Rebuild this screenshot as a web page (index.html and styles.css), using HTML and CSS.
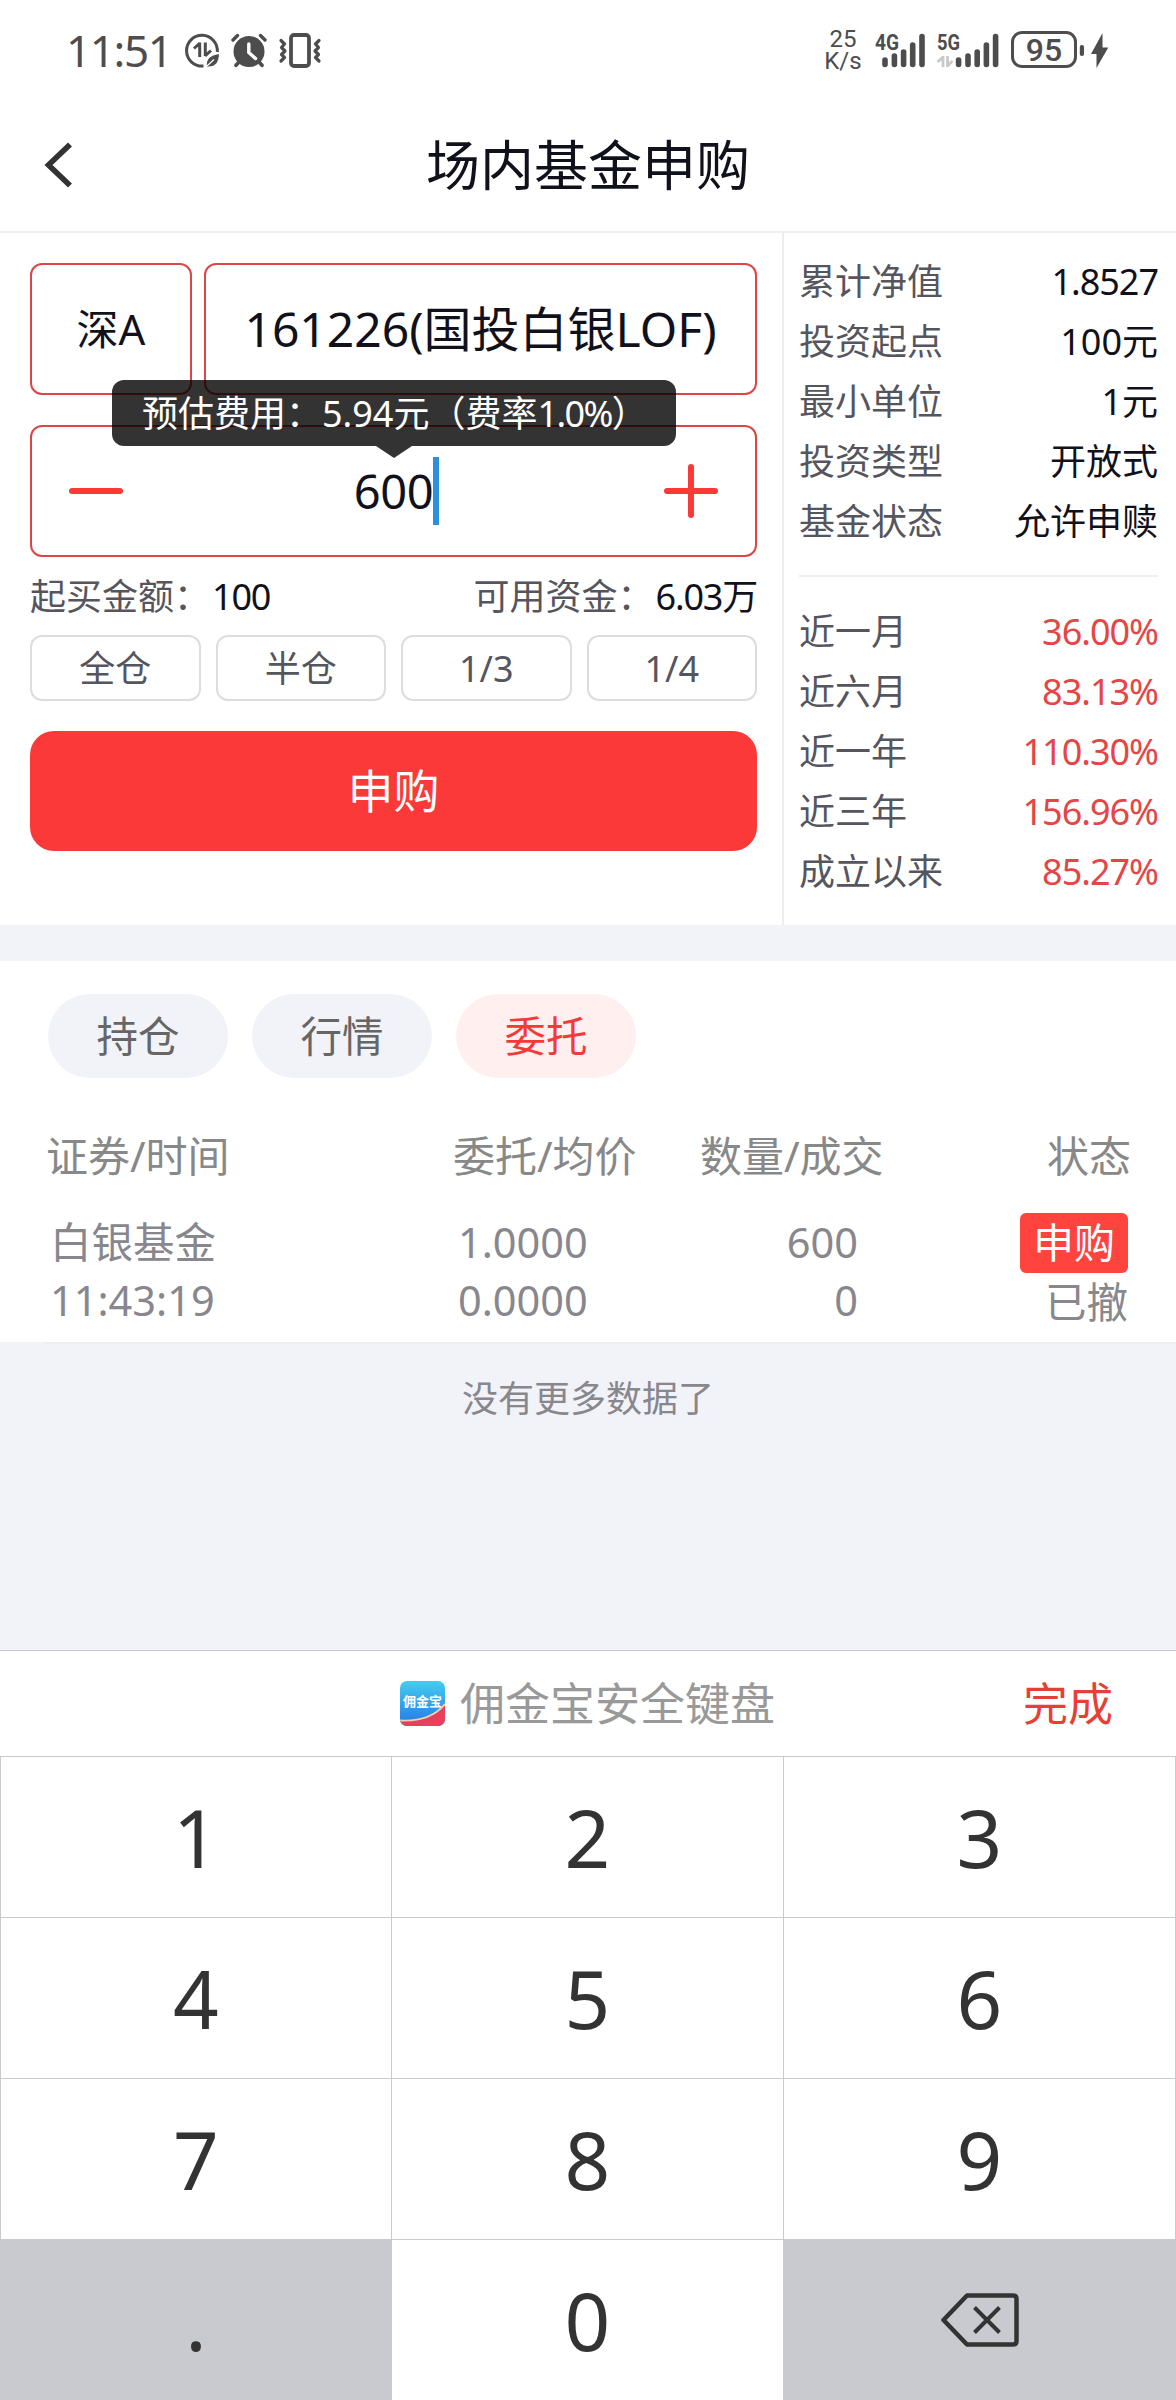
FILE: index.html
```html
<!DOCTYPE html>
<html lang="zh-CN">
<head>
<meta charset="utf-8">
<title>场内基金申购</title>
<link rel="stylesheet" href="styles.css">
</head>
<body>
<header class="statusbar">
  <span class="clock">11:51</span>
  <svg class="ic-data" width="36" height="36" viewBox="184 31 36 36" fill="none" stroke="#4d4d4d">
    <path d="M203.500 65A15.400 15.400 0 1 1 217.300 51" stroke-width="3"/>
    <path d="M199.700 41.500V56M194 47.500L200 42" stroke-width="3"/>
    <path d="M205.300 41.500V55M205 55L211 49.500" stroke-width="3"/>
    <path d="M219 53C218.500 61 216 66 207 65.500C206 58 210 54.500 219 53Z" fill="#4d4d4d" stroke="none"/>
    <path d="M207 65L214 58.500" stroke="#fff" stroke-width="1.200"/>
  </svg>
  <svg class="ic-alarm" width="38" height="36" viewBox="230 31 38 36" fill="none" stroke="#4d4d4d" stroke-linecap="round">
    <circle cx="249" cy="50.500" r="15.500" fill="#4d4d4d" stroke="none"/>
    <path d="M233 39L237.500 34.500M260.500 34.500L265 39" stroke-width="3.400"/>
    <path d="M239 61L236 64.300M259 61L262 64.300" stroke-width="3.600"/>
    <path d="M248.800 43V51.500L255.500 57.500" stroke="#fff" stroke-width="3.400"/>
  </svg>
  <svg class="ic-vib" width="44" height="36" viewBox="278 31 44 36" fill="none" stroke="#4d4d4d" stroke-width="3.200" stroke-linecap="round" stroke-linejoin="round">
    <rect x="291" y="34" width="18" height="31" rx="3" stroke-width="3.800"/>
    <path d="M281 39.500L284.500 43L281.500 46.500L285 50L281.500 53.500L284.500 56.500L281 60"/>
    <path d="M319 39.500L315.500 43L318.500 46.500L315 50L318.500 53.500L315.500 56.500L319 60"/>
  </svg>
  <div class="netspeed"><span>25</span><span>K/s</span></div>
  <svg class="ic-sig" width="52" height="36" viewBox="874 31 52 36">
    <text class="gen" x="875" y="49" textLength="24" lengthAdjust="spacingAndGlyphs">4G</text>
    <g stroke="#4d4d4d" stroke-width="5.600" stroke-linecap="round"><path d="M885 59V63.500M894.400 55V63.500M903.600 51V63.500M912.700 44V63.500M922 35.500V63.500"/></g>
  </svg>
  <svg class="ic-sig5" width="64" height="36" viewBox="936 31 64 36">
    <text class="gen" x="937" y="49" textLength="23" lengthAdjust="spacingAndGlyphs">5G</text>
    <path d="M943 55V66M937.500 61L943 56M947.500 55V66M947.500 65L952.500 60" fill="none" stroke="#c9c9c9" stroke-width="2.800"/>
    <g stroke="#4d4d4d" stroke-width="5.600" stroke-linecap="round"><path d="M958.600 59V63.500M968 55V63.500M977.200 51V63.500M986.400 44V63.500M995.600 35.500V63.500"/></g>
  </svg>
  <div class="battery">95</div>
  <svg class="ic-bolt" width="30" height="38" viewBox="1079 30 30 38" fill="#4d4d4d">
    <rect x="1079.800" y="44" width="4.200" height="11" rx="2"/>
    <path d="M1102.500 32L1091 53H1096.500V67L1108.300 46.500H1102.500Z"/>
  </svg>
</header>

<nav class="navbar">
  <svg class="back" width="28" height="48" viewBox="44 141 28 48" fill="none" stroke="#333" stroke-width="5.600"><path d="M70 144.500L48.500 165L70 185.500"/></svg>
  <h1 class="title">场内基金申购</h1>
</nav>

<main>
  <section class="trade">
    <div class="order">
      <div class="codes">
        <div class="field market">深A</div>
        <div class="field code">161226(国投白银LOF)</div>
      </div>
      <div class="field amount">
        <svg width="54" height="54" viewBox="0 0 54 54" stroke="#fa3938" stroke-width="6" stroke-linecap="round"><path d="M3 27H51"/></svg>
        <div class="amount-value">600<i class="caret"></i></div>
        <svg width="54" height="54" viewBox="0 0 54 54" stroke="#fa3938" stroke-width="6" stroke-linecap="round"><path d="M3 27H51M27 3V51"/></svg>
        <div class="tip">预估费用：5.94元（费率<span class="rate">1.0%</span>）</div>
      </div>
      <div class="limits">
        <span>起买金额：<b>100</b></span>
        <span>可用资金：<b>6.03万</b></span>
      </div>
      <div class="ratios">
        <span>全仓</span><span>半仓</span><span>1/3</span><span>1/4</span>
      </div>
      <div class="submit">申购</div>
    </div>
    <aside class="info">
      <dl class="facts">
        <div><dt>累计净值</dt><dd class="num">1.8527</dd></div>
        <div><dt>投资起点</dt><dd>100元</dd></div>
        <div><dt>最小单位</dt><dd>1元</dd></div>
        <div><dt>投资类型</dt><dd>开放式</dd></div>
        <div><dt>基金状态</dt><dd>允许申赎</dd></div>
      </dl>
      <dl class="facts returns">
        <div><dt>近一月</dt><dd class="num">36.00%</dd></div>
        <div><dt>近六月</dt><dd class="num">83.13%</dd></div>
        <div><dt>近一年</dt><dd class="num">110.30%</dd></div>
        <div><dt>近三年</dt><dd class="num">156.96%</dd></div>
        <div><dt>成立以来</dt><dd class="num">85.27%</dd></div>
      </dl>
    </aside>
  </section>

  <section class="records">
    <div class="tabs"><span>持仓</span><span>行情</span><span class="active">委托</span></div>
    <div class="grid head"><span>证券/时间</span><span>委托/均价</span><span>数量/成交</span><span class="end">状态</span></div>
    <div class="grid row">
      <div><p>白银基金</p><p>11:43:19</p></div>
      <div class="price"><p>1.0000</p><p>0.0000</p></div>
      <div class="qty"><p>600</p><p>0</p></div>
      <div class="state"><p class="badge">申购</p><p>已撤</p></div>
    </div>
  </section>
  <p class="nomore">没有更多数据了</p>
</main>

<footer class="keyboard">
  <div class="kb-bar">
    <div class="kb-brand">
      <svg width="45" height="45" viewBox="0 0 45 45">
        <defs>
          <linearGradient id="sky" x1="0" y1="0" x2="0" y2="1"><stop offset="0" stop-color="#45cdf0"/><stop offset="1" stop-color="#2577e6"/></linearGradient>
          <clipPath id="tile"><rect width="45" height="45" rx="7"/></clipPath>
        </defs>
        <g clip-path="url(#tile)">
          <rect width="45" height="45" fill="url(#sky)"/>
          <path d="M0 40Q30 42 45 24V45H0Z" fill="#e8405c"/>
          <path d="M0 39.500Q30 41 45 23" fill="none" stroke="#f6cfa5" stroke-width="1.800"/>
        </g>
        <text class="logo-text" x="3" y="24.500">佣金宝</text>
      </svg>
      <span>佣金宝安全键盘</span>
    </div>
    <span class="done">完成</span>
  </div>
  <div class="keys">
    <span>1</span><span>2</span><span>3</span>
    <span>4</span><span>5</span><span>6</span>
    <span>7</span><span>8</span><span>9</span>
    <span class="fn">.</span><span>0</span>
    <span class="fn"><svg width="80" height="56" viewBox="0 0 80 56" fill="none" stroke="#333" stroke-width="4.500" stroke-linejoin="round"><path d="M27 3.500H73Q76.500 3.500 76.500 7V49Q76.500 52.500 73 52.500H27L3.500 28Z"/><path d="M34.500 15.500L59.500 40.500M59.500 15.500L34.500 40.500" stroke-width="4"/></svg></span>
  </div>
</footer>
</body>
</html>
```

FILE: styles.css
```css
* { box-sizing: border-box; margin: 0; padding: 0; }

body {
  width: 1176px;
  height: 2400px;
  display: flex;
  flex-direction: column;
  overflow: hidden;
  background: #f2f3f8;
  color: #11111c;
  font-family: "Noto Sans", "Noto Sans CJK SC", sans-serif;
  font-size: 36px;
  line-height: 60px;
  white-space: nowrap;
}

svg { display: block; flex: none; overflow: visible; }

/* status bar */
.statusbar {
  display: flex;
  align-items: center;
  height: 99px;
  padding-left: 66px;
  background: #fff;
  color: #4d4d4d;
}
.clock { width: 118px; font-size: 44px; letter-spacing: -1.4px; }
.ic-alarm { margin-left: 10px; }
.ic-vib { margin-left: 10px; }
.netspeed {
  display: flex;
  flex-direction: column;
  align-items: center;
  width: 40px;
  margin-left: 501px;
  font: 24px/22px Roboto, sans-serif;
}
.ic-sig { margin-left: 11px; }
.ic-sig5 { margin-left: 10px; }
.gen { font: bold 22px Roboto, sans-serif; fill: #4d4d4d; }
.battery {
  width: 66px;
  height: 37px;
  margin-left: 11px;
  border: 3px solid #4d4d4d;
  border-radius: 11px;
  font: 500 32px/32px Roboto, sans-serif;
  text-align: center;
}
.ic-bolt { margin-left: 2px; }

/* title bar */
.navbar {
  display: grid;
  grid-template-columns: 72px 1fr 72px;
  align-items: center;
  height: 134px;
  border-bottom: 2px solid #eee;
  background: #fff;
}
.back { justify-self: end; }
.title { font-size: 54px; font-weight: 400; text-align: center; }

/* trade form and fund facts */
.trade { display: flex; height: 692px; background: #fff; }
.order { width: 782px; padding: 30px 25px 0 30px; }
.field {
  display: flex;
  align-items: center;
  justify-content: center;
  height: 132px;
  border: 2px solid #dd4646;
  border-radius: 12px;
}
.codes { display: flex; gap: 12px; }
.market { width: 162px; font-size: 42px; }
.code { flex: 1; font-size: 48px; }
.amount {
  position: relative;
  justify-content: space-between;
  margin-top: 30px;
  padding: 0 37px;
  font-size: 47px;
}
.amount-value { display: flex; align-items: center; margin-left: 6px; letter-spacing: -0.4px; }
.caret { width: 6px; height: 68px; background: #2f8fdf; }
.tip {
  position: absolute;
  left: 80px;
  top: -47px;
  width: 564px;
  height: 66px;
  padding-left: 30px;
  border-radius: 12px;
  background: rgba(0, 0, 0, .8);
  color: #fff;
  font-size: 36px;
  line-height: 68px;
}
.rate { letter-spacing: -1.6px; }
.tip::after {
  content: "";
  position: absolute;
  left: 264px;
  top: 66px;
  border: 18px solid transparent;
  border-top: 12px solid rgba(0, 0, 0, .8);
  border-bottom: 0;
}
.limits { display: flex; justify-content: space-between; height: 78px; line-height: 80px; color: #55555e; }
.limits b { margin-left: 2px; font-weight: 400; letter-spacing: -1.2px; color: #11111c; }
.ratios { display: grid; grid-template-columns: repeat(4, 1fr); gap: 15px; }
.ratios span {
  height: 66px;
  border: 2px solid #ddd;
  border-radius: 12px;
  color: #55555e;
  line-height: 64px;
  text-align: center;
}
.submit {
  height: 120px;
  margin-top: 30px;
  border-radius: 24px;
  background: #fa3938;
  color: #fff;
  font-size: 46px;
  line-height: 118px;
  text-align: center;
}
.info { flex: 1; padding: 19px 18px 0 15px; border-left: 2px solid #eee; }
.facts div { display: flex; justify-content: space-between; height: 60px; }
.facts dt { color: #55555e; }
.facts .num { letter-spacing: -1px; }
.returns { margin-top: 23px; padding-top: 25px; border-top: 2px solid #eee; }
.returns dd { color: #e64545; }

/* order list */
.records {
  height: 383px;
  margin-top: 36px;
  padding-top: 33px;
  background:
    linear-gradient(#fff, #fff) 0 0 / 100% 381px no-repeat,
    linear-gradient(#eee, #eee) 45px 100% / 100% 2px no-repeat;
  color: #87878d;
  font-size: 41.500px;
}
.tabs { display: flex; gap: 24px; padding-left: 48px; }
.tabs span {
  width: 180px;
  height: 84px;
  border-radius: 42px;
  background: #f2f3f8;
  color: #666;
  line-height: 84px;
  text-align: center;
}
.tabs .active { background: #fff0ef; color: #f23a38; }
.grid { display: grid; grid-template-columns: 407px 247px 245px 1fr; }
.head { height: 60px; margin-top: 48px; padding: 0 45px 0 46px; color: #888; font-size: 42px; }
.end { text-align: right; }
.row { margin-top: 27px; padding: 0 48px 0 50px; line-height: 58px; }
.price { padding-left: 1px; }
.qty { padding-right: 91px; text-align: right; }
.state { display: flex; flex-direction: column; align-items: flex-end; }
.badge {
  width: 108px;
  height: 60px;
  border-radius: 6px;
  background: #ff4440;
  color: #fff;
  font-size: 41px;
  line-height: 58px;
  text-align: center;
}
.nomore { margin-top: 25px; color: #87878d; text-align: center; }

/* numeric keyboard */
.keyboard { margin-top: auto; background: #fff; }
.kb-bar {
  display: flex;
  align-items: center;
  height: 106px;
  padding: 0 63px 0 400px;
  border-top: 1px solid #c9cacf;
  justify-content: space-between;
  font-size: 45px;
}
.kb-brand { display: flex; align-items: center; gap: 15px; color: #999; }
.logo-text { font: bold 13px "Noto Sans CJK SC", sans-serif; fill: #fff; }
.done { color: #e64034; }
.keys {
  display: grid;
  grid-template-columns: 390px 391px 391px;
  grid-auto-rows: 160px;
  gap: 1px;
  padding: 1px 1px 0;
  background: #c9cacf;
}
.keys span {
  display: flex;
  align-items: center;
  justify-content: center;
  background: #fff;
  color: #333;
  font-size: 80px;
}
.keys .fn { background: #c9cacf; }
```
